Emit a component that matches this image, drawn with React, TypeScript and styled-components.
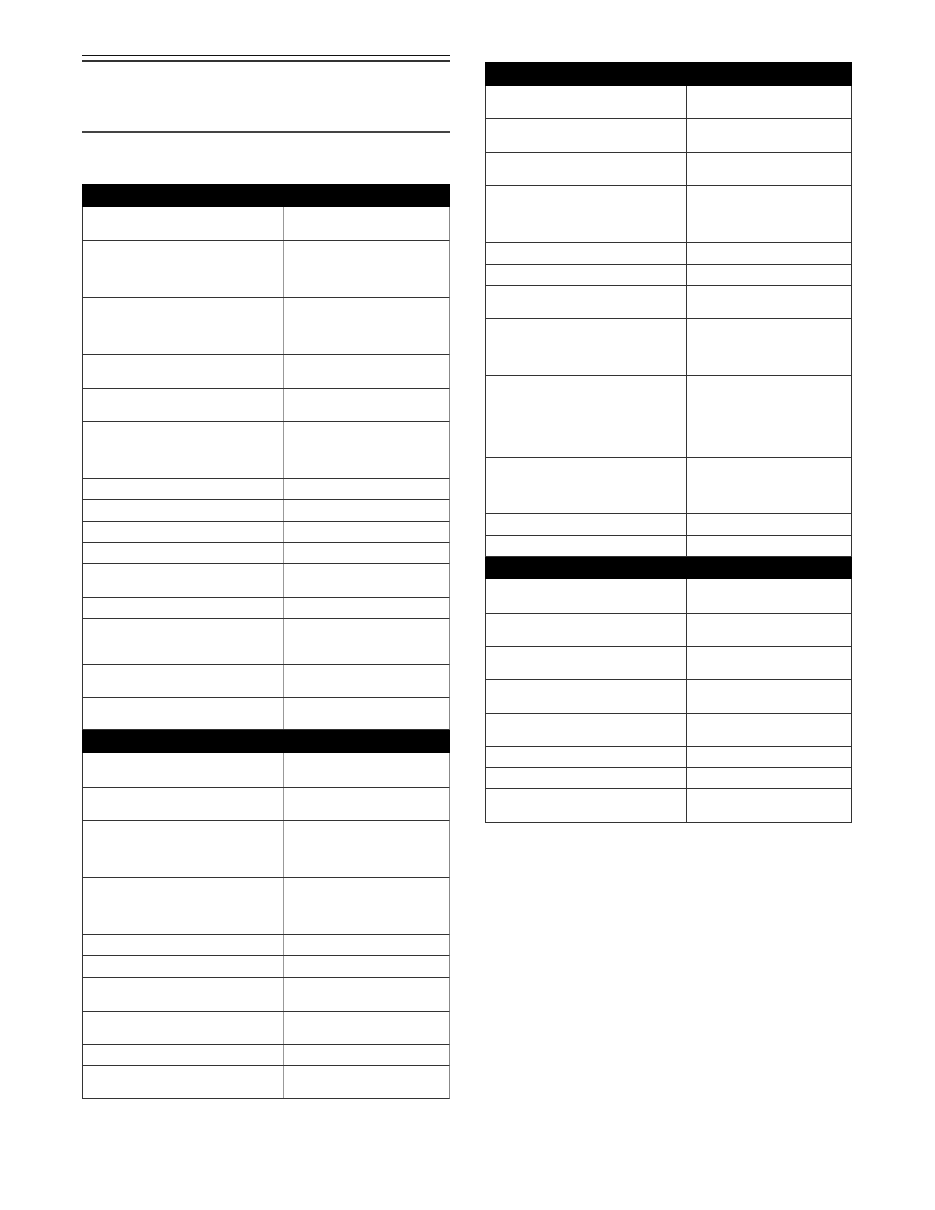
import styled, { createGlobalStyle } from "styled-components";

const GlobalStyle = createGlobalStyle`
  html, body {
    margin: 0;
    padding: 0;
    background: #ffffff;
    font-family: "Liberation Sans", Arial, sans-serif;
  }
  * {
    box-sizing: border-box;
  }
`;

const Page = styled.div`
  display: flex;
  align-items: flex-start;
  gap: 35px;
  padding-left: 82px;
  width: 935px;
  min-height: 1210px;
`;

const Column = styled.div<{ $top: number; $width: number }>`
  display: flex;
  flex-direction: column;
  width: ${(p) => p.$width}px;
  padding-top: ${(p) => p.$top}px;
`;

const DoubleRule = styled.div`
  height: 7px;
  border-top: 1px solid #111;
  border-bottom: 2px solid #333;
`;

const TitleArea = styled.div`
  height: 71px;
  border-bottom: 2px solid #444;
  margin-bottom: 51px;
`;

const Table = styled.div`
  display: flex;
  flex-direction: column;
`;

const SectionHead = styled.div<{ $h: number }>`
  height: ${(p) => p.$h}px;
  background: #000;
`;

const Row = styled.div<{ $h: number; $edge: string }>`
  display: grid;
  grid-template-columns: 201px 1fr;
  height: ${(p) => p.$h}px;
  border-left: 1px solid #333;
  border-right: 1px solid ${(p) => p.$edge};
  border-bottom: 1px solid #333;
`;

const Cell = styled.div<{ $divider?: string }>`
  border-right: ${(p) => (p.$divider ? `1px solid ${p.$divider}` : "none")};
  font-size: 11px;
  line-height: 12px;
  padding: 4px 6px;
`;

type Section = { head: number; rows: number[] };

const leftSections: Section[] = [
  {
    head: 22.7,
    rows: [34.3, 57.3, 57, 34, 32.4, 57.6, 20.7, 21.7, 21.6, 21, 34, 21, 46, 32.7, 32],
  },
  {
    head: 23.3,
    rows: [34.4, 33.3, 57.3, 56.7, 21.3, 21.4, 34, 33, 21.3, 33.3],
  },
];

const rightSections: Section[] = [
  {
    head: 23.4,
    rows: [33.6, 33.4, 33.8, 57, 21.5, 21.5, 32.8, 57.2, 81.2, 56.6, 22, 20.4],
  },
  {
    head: 22.8,
    rows: [34.2, 33.8, 32.8, 33.4, 33.3, 21.3, 21, 33.4],
  },
];

function SpecTable({
  sections,
  divider,
  edge,
}: {
  sections: Section[];
  divider: string;
  edge: string;
}) {
  return (
    <Table>
      {sections.map((s, i) => (
        <div key={i}>
          <SectionHead $h={s.head} />
          {s.rows.map((h, j) => (
            <Row key={j} $h={h} $edge={edge}>
              <Cell $divider={divider} />
              <Cell />
            </Row>
          ))}
        </div>
      ))}
    </Table>
  );
}

export default function App() {
  return (
    <>
      <GlobalStyle />
      <Page>
        <Column $top={55} $width={368}>
          <DoubleRule />
          <TitleArea />
          <SpecTable sections={leftSections} divider="#999" edge="#888" />
        </Column>
        <Column $top={62.3} $width={367}>
          <SpecTable sections={rightSections} divider="#333" edge="#333" />
        </Column>
      </Page>
    </>
  );
}
